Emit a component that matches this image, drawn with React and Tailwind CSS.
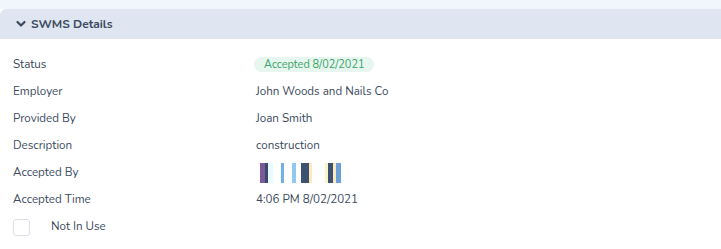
import React from 'react';

const rows = [
    { label: "Employer", value: "John Woods and Nails Co" },
    { label: "Provided By", value: "Joan Smith" },
    { label: "Description", value: "construction" },
];

// signature drawn as coloured stripes: [x offset, width, colour]
const sigBars = [
    [0, 5, "#7b5a9a"],
    [5, 3, "#3a4a6a"],
    [8, 5, "#e8fbff"],
    [21, 3, "#6fb0e6"],
    [32, 4, "#90c8f0"],
    [41, 8, "#3d5270"],
    [49, 3, "#fde9c0"],
    [65, 3, "#fdf3c8"],
    [68, 5, "#3d5270"],
    [73, 3, "#fde9c0"],
    [76, 5, "#6a9fd8"],
];

const Signature = () => (
    <svg width="82" height="20" viewBox="0 0 82 20" className="block">
        {sigBars.map(([x, w, c], i) => (
            <rect key={i} x={x} y="0" width={w} height="20" fill={c} />
        ))}
    </svg>
);

const Row = ({ label, children }) => (
    <div className="flex items-center h-[27px]">
        <div className="w-[243px] shrink-0">{label}</div>
        <div className="flex items-center">{children}</div>
    </div>
);

export default function App() {
    return (
        <div className="w-[721px] h-[249px] bg-white text-[11.6px] text-[#3b4a5e] font-['Nunito','Lato',sans-serif] overflow-hidden">
            <div className="h-[9px] bg-[#f1f5fc]" />
            {/* Panel header */}
            <div className="h-[30px] bg-[#dfe5f1] rounded-tl-[6px] flex items-center pl-[16px] gap-[5px] font-bold text-[12px]">
                <svg width="10" height="10" viewBox="0 0 10 10" className="text-[#3b4a5e] -mt-[1px]">
                    <path d="M1.5 3 L5 6.5 L8.5 3" fill="none" stroke="currentColor" strokeWidth="2.2" strokeLinecap="round" strokeLinejoin="round" />
                </svg>
                <span>SWMS Details</span>
            </div>

            <div className="pl-[13px] pt-[12px]">
                <Row label="Status">
                    <span className="-ml-[2px] px-[10px] h-[15px] leading-[15px] rounded-full bg-[#e7f6ee] text-[#39a36a] text-[10.9px]">
                        Accepted 8/02/2021
                    </span>
                </Row>
                {rows.map((r) => (
                    <Row key={r.label} label={r.label}>{r.value}</Row>
                ))}
                <Row label="Accepted By">
                    <div className="ml-[4px]"><Signature /></div>
                </Row>
                <Row label="Accepted Time">4:06 PM 8/02/2021</Row>
                <div className="flex items-center h-[28px] gap-[21px]">
                    <div className="w-[17px] h-[17px] rounded-[3px] border border-[#dcdfe6] bg-white" />
                    <span>Not In Use</span>
                </div>
            </div>
        </div>
    );
}
